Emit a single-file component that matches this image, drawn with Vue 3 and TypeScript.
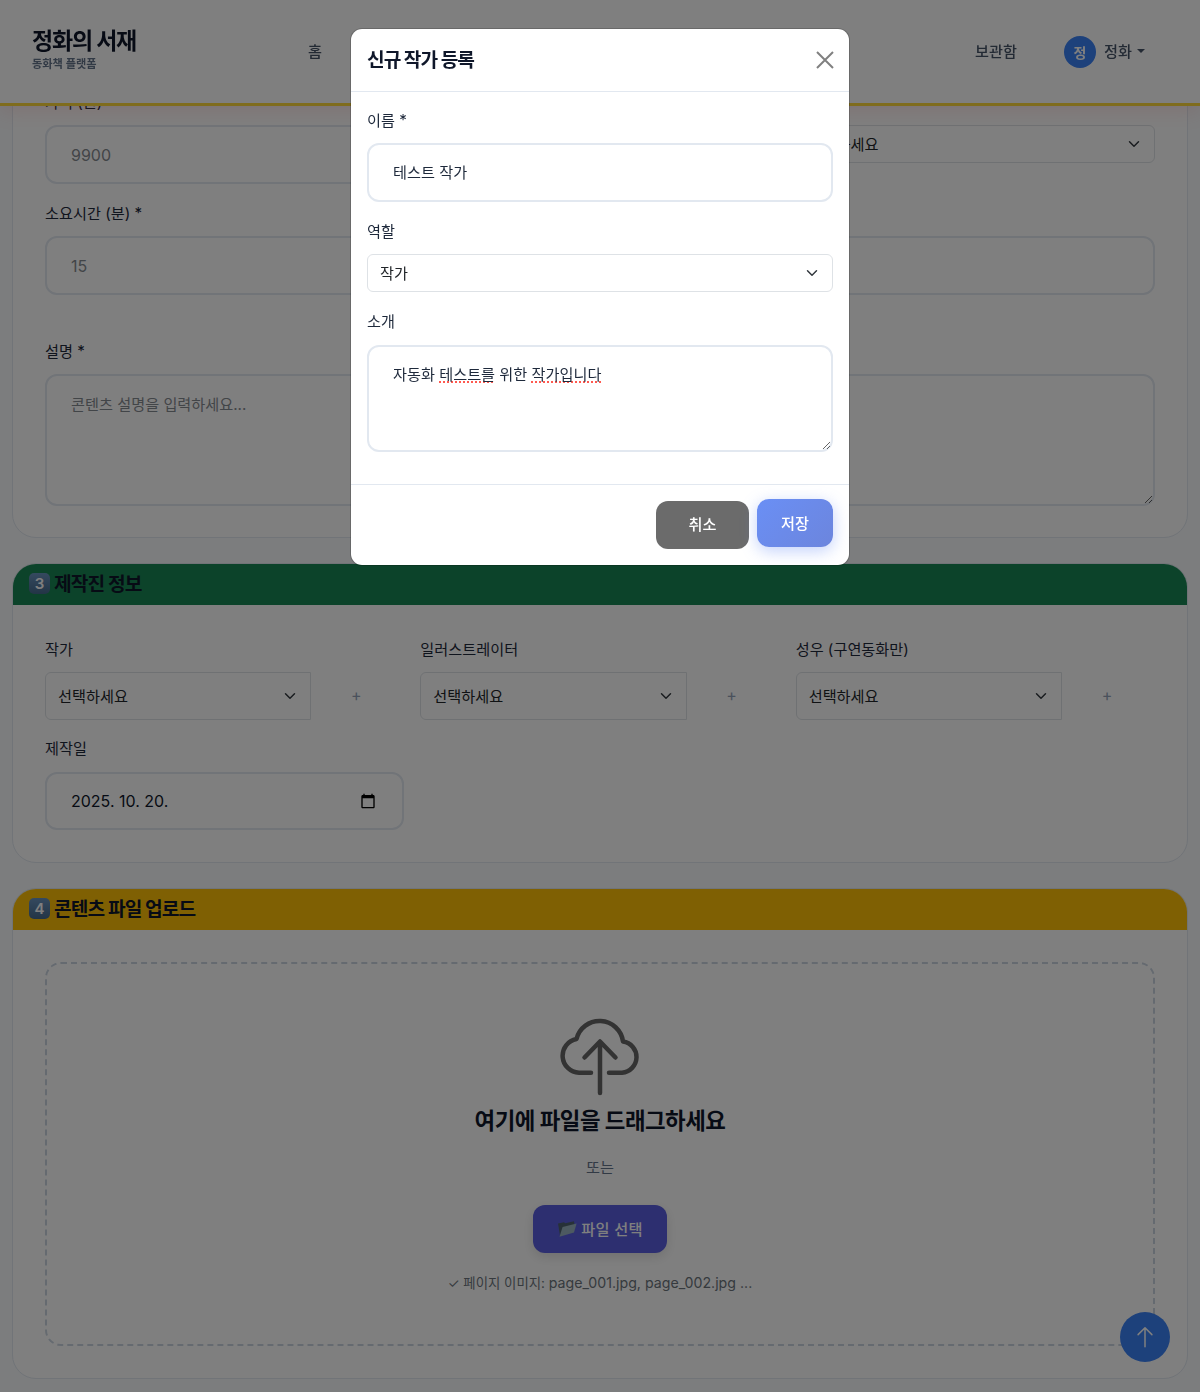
<script setup lang="ts">
interface TeamField {
  label: string
}

const navItems: string[] = ['홈', '동화책', '구연동화', '보관함']

const teamFields: TeamField[] = [
  { label: '작가' },
  { label: '일러스트레이터' },
  { label: '성우 (구연동화만)' },
]
</script>

<template>
  <div class="page">
    <header class="topbar">
      <div class="brand">
        <div class="brand__name">정화의 서재</div>
        <div class="brand__sub">동화책 플랫폼</div>
      </div>
      <nav class="nav">
        <a v-for="item in navItems" :key="item" class="nav__item">{{ item }}</a>
      </nav>
      <div class="user">
        <span class="user__avatar">정</span>
        <span class="user__name">정화</span>
        <span class="user__caret"></span>
      </div>
    </header>

    <main class="content">
      <section class="card card--cut">
        <div class="card__body">
          <div class="grid">
            <div class="field">
              <label class="label">가격 (원) *</label>
              <input class="control control--num" type="text" placeholder="9900" />
            </div>
            <div class="field">
              <label class="label">페이지 수</label>
              <input class="control" type="text" />
            </div>
            <div class="field">
              <label class="label">연령대 *</label>
              <select class="picker"><option>선택하세요</option></select>
            </div>
            <div class="field">
              <label class="label">소요시간 (분) *</label>
              <input class="control control--num" type="text" placeholder="15" />
            </div>
            <div class="field">
              <label class="label">언어</label>
              <input class="control" type="text" />
            </div>
            <div class="field">
              <label class="label">분량</label>
              <input class="control" type="text" />
            </div>
          </div>
          <div class="field field--desc">
            <label class="label">설명 *</label>
            <textarea class="control control--area" placeholder="콘텐츠 설명을 입력하세요..."></textarea>
          </div>
        </div>
      </section>

      <section class="card">
        <h2 class="card__head card__head--green"><span class="keycap">3</span>제작진 정보</h2>
        <div class="card__body">
          <div class="grid">
            <div v-for="team in teamFields" :key="team.label" class="field">
              <label class="label">{{ team.label }}</label>
              <div class="team">
                <select class="picker picker--team"><option>선택하세요</option></select>
                <button class="team__add" type="button">+</button>
              </div>
            </div>
            <div class="field field--last">
              <label class="label">제작일</label>
              <div class="control control--date">
                <span>2025. 10. 20.</span>
                <svg class="calendar" viewBox="0 0 24 24" width="16" height="16">
                  <path
                    fill="#000"
                    d="M20 3h-1V1h-2v2H7V1H5v2H4c-1.1 0-2 .9-2 2v16c0 1.1.9 2 2 2h16c1.1 0 2-.9 2-2V5c0-1.1-.9-2-2-2zm0 18H4V8h16v13z"
                  />
                </svg>
              </div>
            </div>
          </div>
        </div>
      </section>

      <section class="card">
        <h2 class="card__head card__head--amber"><span class="keycap">4</span>콘텐츠 파일 업로드</h2>
        <div class="card__body">
          <div class="drop">
            <svg class="drop__icon" viewBox="0 0 80 80" width="80" height="80" fill="none">
              <path
                d="M31 55.7H19A17 17 0 0 1 16.5 22A23.7 23.7 0 0 1 63 24.5A15.7 15.7 0 0 1 62 55.7H49"
                stroke="#666"
                stroke-width="4.5"
                stroke-linecap="round"
                stroke-linejoin="round"
              />
              <path
                d="M24.5 40.5L40 24.5L55.5 40.5M40 25V76"
                stroke="#666"
                stroke-width="4.5"
                stroke-linecap="round"
                stroke-linejoin="round"
              />
            </svg>
            <h3 class="drop__title">여기에 파일을 드래그하세요</h3>
            <p class="drop__or">또는</p>
            <button class="drop__btn" type="button">
              <svg viewBox="0 0 20 20" width="20" height="20">
                <path d="M1 5.5l6-1.2 1.2 1L17 3.2l1 8-15 6.3z" fill="#4f6370" />
                <path d="M2.5 18.8L5.6 9l14-3.6-2.6 9.2z" fill="#9ab4c2" />
              </svg>
              <span>파일 선택</span>
            </button>
            <p class="drop__hint">✓ 페이지 이미지: <span class="drop__files">page_001.jpg, page_002.jpg ...</span></p>
          </div>
        </div>
      </section>
    </main>

    <button class="fab" type="button" aria-label="맨 위로">
      <svg viewBox="0 0 16 16" width="24" height="24" fill="none">
        <path d="M8 14.5V1.8M3.4 6.4L8 1.8l4.6 4.6" stroke="#fff" stroke-width="1" stroke-linecap="round" stroke-linejoin="round" />
      </svg>
    </button>

    <div class="backdrop">
      <div class="modal">
        <div class="modal__head">
          <h5 class="modal__title">신규 작가 등록</h5>
          <button class="modal__close" type="button" aria-label="닫기">
            <svg viewBox="0 0 18 18" width="18" height="18" fill="none">
              <path d="M1 1L17 17M17 1L1 17" stroke="#808080" stroke-width="2" />
            </svg>
          </button>
        </div>
        <div class="modal__body">
          <div class="field">
            <label class="label">이름 *</label>
            <input class="control" type="text" value="테스트 작가" />
          </div>
          <div class="field">
            <label class="label">역할</label>
            <select class="picker"><option>작가</option></select>
          </div>
          <div class="field">
            <label class="label">소개</label>
            <div class="control control--bio">자동화 <span class="typo">테스트를</span> 위한 <span class="typo">작가입니다</span></div>
          </div>
        </div>
        <div class="modal__foot">
          <button class="btn btn--cancel" type="button">취소</button>
          <button class="btn btn--save" type="button">저장</button>
        </div>
      </div>
    </div>
  </div>
</template>

<style>
html,
body {
  background: #f8fafc;
}
</style>

<style scoped>
.page {
  position: relative;
  height: 1392px;
  overflow: hidden;
  font-family: Inter, 'Noto Sans CJK KR', sans-serif;
  font-size: 15.2px;
  color: #1e293b;
}

.topbar {
  position: fixed;
  top: 0;
  left: 0;
  right: 0;
  z-index: 10;
  height: 103px;
  display: flex;
  align-items: center;
  padding: 0 32px;
  background: #fff;
  border-bottom: 3px solid #ffd83a;
  box-shadow: 0 4px 20px rgba(255, 77, 77, 0.15);
}

.brand {
  width: 276px;
  margin-top: -5px;
}

.brand__name {
  font-size: 23px;
  line-height: 30px;
  font-weight: 700;
  letter-spacing: -1.2px;
  color: #0f172a;
}

.brand__sub {
  font-size: 11.2px;
  line-height: 16px;
  font-weight: 600;
  color: #64748b;
}

.nav {
  flex: none;
  width: 709px;
  display: flex;
  justify-content: space-between;
  margin-top: -4px;
}

.nav__item {
  font-weight: 500;
  color: #475569;
}

.user {
  margin-left: 47px;
  display: flex;
  align-items: center;
  margin-top: 1px;
}

.user__avatar {
  width: 32px;
  height: 32px;
  border-radius: 50%;
  display: flex;
  align-items: center;
  justify-content: center;
  background: #3b82f6;
  color: #fff;
  font-weight: 700;
  font-size: 14px;
}

.user__name {
  margin: -4px 0 0 8px;
  font-weight: 500;
  color: #475569;
}

.user__caret {
  margin: -2px 0 0 5px;
  border-top: 4.5px solid #475569;
  border-left: 4.5px solid transparent;
  border-right: 4.5px solid transparent;
}

.content {
  padding: 0 12px;
}

.card {
  margin-bottom: 25px;
  background: #fff;
  border: 1px solid #e2e8f0;
  border-radius: 24px;
  overflow: hidden;
}

.card--cut {
  margin-top: -40px;
  height: 576px;
}

.card--cut .card__body {
  padding-top: 129px;
}

.card__head {
  margin: 0;
  height: 41px;
  box-sizing: border-box;
  padding: 0 16px 3px;
  display: flex;
  align-items: center;
  gap: 4px;
  font-size: 19.2px;
  font-weight: 700;
  letter-spacing: -0.9px;
  color: #0f172a;
}

.card__head--green {
  background: #198754;
}

.card__head--amber {
  background: #ffc107;
}

.keycap {
  flex: none;
  width: 21px;
  height: 21px;
  border-radius: 5px;
  display: flex;
  align-items: center;
  justify-content: center;
  background: linear-gradient(#6a94bf, #466a8c);
  font-size: 15px;
  font-weight: 600;
  letter-spacing: 0;
  color: #fff;
}

.card__body {
  padding: 32px;
}

.grid {
  display: grid;
  grid-template-columns: repeat(3, 1fr);
  column-gap: 16px;
}

.field {
  margin-bottom: 17px;
}

.field--desc {
  margin-top: 26.5px;
  margin-bottom: 0;
}

.field--last {
  margin-top: -1px;
  margin-bottom: 0;
}

.label {
  display: block;
  padding-top: 1px;
  line-height: 24px;
  margin-bottom: 10.3px;
  color: #1e293b;
}

.control {
  display: block;
  box-sizing: border-box;
  width: 100%;
  padding: 17px 24px 15px;
  border: 2px solid #e2e8f0;
  border-radius: 12px;
  background: #fff;
  font: inherit;
  line-height: 22.8px;
  color: #1e293b;
  outline: none;
}

.control::placeholder {
  color: #858a90;
  opacity: 1;
}

.control--num {
  font-size: 16px;
}

.control--area {
  height: 132px;
  resize: vertical;
  padding-top: 18px;
}

.control--bio {
  height: 107px;
  resize: vertical;
  overflow: auto;
}

.typo {
  text-decoration: underline dotted #ff5a50 1.5px;
  text-underline-offset: 2px;
}

.control--date {
  display: flex;
  align-items: center;
  justify-content: space-between;
  padding: 16px 26px 16px 24px;
  font-size: 16px;
  color: #0f172a;
}

.calendar {
  flex: none;
}

.picker {
  display: block;
  box-sizing: border-box;
  width: 100%;
  height: 38px;
  padding: 0 36px 0 12px;
  border: 1px solid #dee2e6;
  border-radius: 6px;
  font: inherit;
  color: #212529;
  appearance: none;
  background: #fff url("data:image/svg+xml,%3csvg xmlns='http://www.w3.org/2000/svg' viewBox='0 0 16 16'%3e%3cpath fill='none' stroke='%23343a40' stroke-linecap='round' stroke-linejoin='round' stroke-width='2' d='m2 5 6 6 6-6'/%3e%3c/svg%3e") no-repeat right 12px center / 16px 12px;
}

.picker--team {
  flex: 1;
  min-width: 0;
  height: 48px;
  border-radius: 6px 0 0 6px;
}

.team {
  display: flex;
  align-items: center;
}

.team__add {
  flex: none;
  width: 93px;
  padding: 0 3px 3px 0;
  border: 0;
  background: none;
  font: inherit;
  font-size: 16px;
  color: #94a3b8;
}

.drop {
  box-sizing: border-box;
  height: 384px;
  padding-top: 53px;
  display: flex;
  flex-direction: column;
  align-items: center;
  border: 2px dashed #cbd5e1;
  border-radius: 16px;
}

.drop__icon {
  flex: none;
}

.drop__title {
  margin: 7px 0 0;
  font-size: 22.4px;
  line-height: 34px;
  font-weight: 700;
  letter-spacing: -0.5px;
  color: #0f172a;
}

.drop__or {
  margin: 18px 0 0;
  font-size: 15.2px;
  line-height: 24px;
  color: #64748b;
}

.drop__btn {
  margin-top: 25px;
  width: 134px;
  height: 48px;
  padding: 0 0 2px;
  display: flex;
  align-items: center;
  justify-content: center;
  gap: 4px;
  border: 0;
  border-radius: 12px;
  background: #5a5fe0;
  box-shadow: 0 4px 12px rgba(0, 0, 0, 0.12);
  font: inherit;
  font-weight: 500;
  letter-spacing: 0.3px;
  color: #fff;
}

.drop__hint {
  margin: 20px 0 0;
  font-size: 13.4px;
  line-height: 20px;
  color: #6c757d;
}

.drop__files {
  font-size: 14.2px;
}

.fab {
  position: fixed;
  left: 1120px;
  top: 1312px;
  z-index: 20;
  width: 50px;
  height: 50px;
  padding: 0;
  display: flex;
  align-items: center;
  justify-content: center;
  border: 0;
  border-radius: 50%;
  background: #3b82f6;
}

.backdrop {
  position: fixed;
  inset: 0;
  z-index: 100;
  display: flex;
  justify-content: center;
  align-items: flex-start;
  background: rgba(0, 0, 0, 0.5);
}

.modal {
  box-sizing: border-box;
  width: 500px;
  margin-top: 28px;
  border: 1px solid rgba(0, 0, 0, 0.175);
  border-radius: 12px;
  background: #fff;
  background-clip: padding-box;
}

.modal__head {
  height: 62px;
  padding: 0 16px;
  display: flex;
  align-items: center;
  justify-content: space-between;
  border-bottom: 1px solid #e2e8f0;
}

.modal__title {
  margin: -2px 0 0;
  font-size: 19.2px;
  font-weight: 700;
  letter-spacing: -1px;
  color: #0f172a;
}

.modal__close {
  padding: 0;
  margin-right: -1px;
  border: 0;
  background: none;
  display: flex;
}

.modal__body {
  padding: 16px 16px 15px;
}

.modal__foot {
  height: 81px;
  box-sizing: border-box;
  padding: 16px;
  display: flex;
  justify-content: flex-end;
  align-items: flex-start;
  gap: 8px;
  border-top: 1px solid #e2e8f0;
}

.btn {
  height: 48px;
  padding-bottom: 3px;
  border: 0;
  border-radius: 12px;
  font: inherit;
  font-weight: 500;
  color: #fff;
}

.btn--cancel {
  width: 93px;
  padding-bottom: 5px;
  background: #6b6b6b;
}

.btn--save {
  width: 76px;
  margin-top: -2px;
  background: linear-gradient(135deg, #6a8ff5, #6c85dd);
  box-shadow: 0 4px 16px rgba(102, 140, 245, 0.4);
}
</style>
